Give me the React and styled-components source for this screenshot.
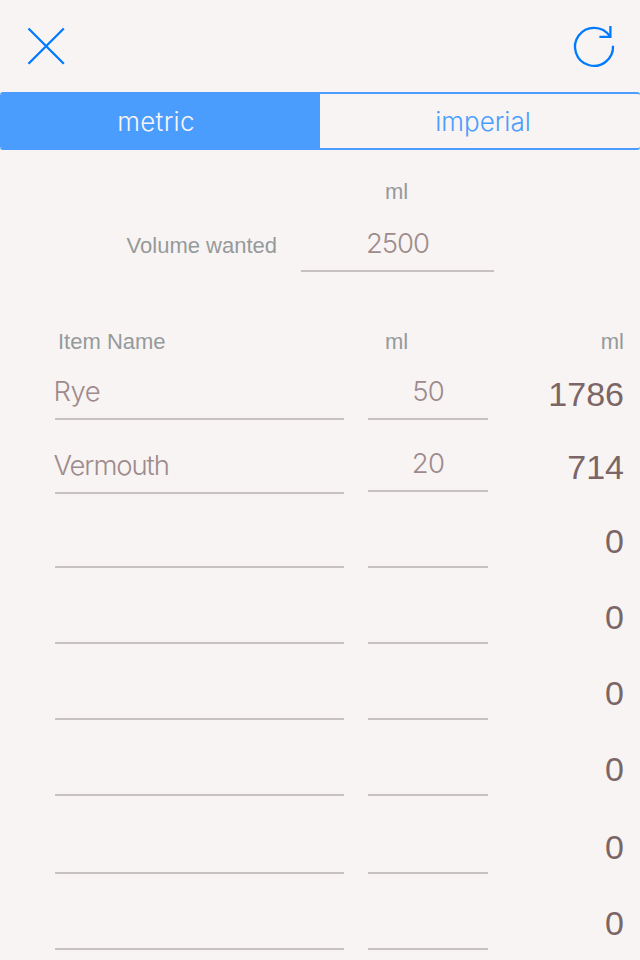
import React from "react";
import styled, { createGlobalStyle } from "styled-components";

const GlobalStyle = createGlobalStyle`
  * {
    box-sizing: border-box;
  }

  body {
    margin: 0;
    background: #f8f4f3;
  }
`;

const Screen = styled.div`
  width: 640px;
  height: 960px;
  overflow: hidden;
  background: #f8f4f3;
  font-family: "Liberation Sans", Arial, sans-serif;
`;

const Header = styled.header`
  display: flex;
  justify-content: space-between;
  height: 92px;
  padding: 22px 22px 0;
`;

const IconButton = styled.button`
  width: 48px;
  height: 48px;
  padding: 0;
  border: 0;
  background: none;
  svg {
    display: block;
    fill: none;
    stroke: #007aff;
    stroke-width: 2.3;
  }
`;

const Segments = styled.div`
  display: grid;
  grid-template-columns: 320px 320px;
  height: 58px;
  border: solid #4a9dfd;
  border-width: 2px 0;
  border-radius: 3px;
  overflow: hidden;
`;

const Segment = styled.button`
  padding: ${(props) => (props.$active ? "1px 8px 0 0" : "1px 0 0 6px")};
  border: 0;
  background: ${(props) => (props.$active ? "#4a9dfd" : "transparent")};
  color: ${(props) => (props.$active ? "#f8f4f3" : "#4a9dfd")};
  font-family: Inter, sans-serif;
  font-size: 26px;
  font-weight: 350;
  line-height: 53px;
  letter-spacing: ${(props) => (props.$active ? "0.3px" : "0")};
`;

const Label = styled.div`
  font-size: 22px;
  line-height: 28px;
  color: #959a9b;
  text-align: ${(props) => props.$align || "left"};
`;

const Field = styled.div`
  height: 50px;
  border-bottom: 2px solid #c7c2c1;
  margin-bottom: ${(props) => props.$lift || 0}px;
  color: #9e8b8d;
  font-family: Inter, sans-serif;
  font-size: 27.5px;
  font-weight: 300;
  line-height: 43px;
  letter-spacing: ${(props) => props.$spacing};
  text-indent: ${(props) => (props.$align ? 0 : "-1.5px")};
  text-align: ${(props) => props.$align || "left"};
`;

const Volume = styled.section`
  display: grid;
  grid-template-columns: 277px 193px;
  column-gap: 24px;
  padding-top: 28px;
`;

const VolumeLabel = styled(Label)`
  margin-top: 26px;
`;

const VolumeUnit = styled(Label)`
  grid-column: 2;
  padding-right: 2px;
`;

const VolumeField = styled(Field)`
  margin-top: 16px;
`;

const Row = styled.div`
  display: grid;
  grid-template-columns: 289px 120px 1fr;
  column-gap: 24px;
  align-items: end;
  height: ${(props) => props.$height}px;
  padding: 0 16px 0 55px;
`;

const HeadRow = styled(Row)`
  margin-top: 56px;
`;

const NameHead = styled(Label)`
  padding-left: 3px;
`;

const UnitHead = styled(Label)`
  padding-left: 17px;
`;

const Result = styled.div`
  height: ${(props) => props.$height || 47}px;
  font-size: 34px;
  line-height: 40px;
  color: #7b6566;
  text-align: right;
`;

const items = [
  { name: "Rye", amount: "50", result: "1786", height: 64, drop: 46, spacing: "-0.5px" },
  { name: "Vermouth", amount: "20", result: "714", height: 74, lift: 2 },
  { result: "0", height: 74 },
  { result: "0", height: 76 },
  { result: "0", height: 76 },
  { result: "0", height: 76 },
  { result: "0", height: 78 },
  { result: "0", height: 76 },
];

const CloseIcon = () => (
  <svg width="48" height="48" viewBox="0 0 48 48">
    <path d="M6.5 6.5 41.8 41.8M41.8 6.5 6.5 41.8" />
  </svg>
);

const ReloadIcon = () => (
  <svg width="48" height="48" viewBox="0 0 48 48">
    <path d="M43 23.8A19 19 0 1 1 39.8 14.2" />
    <path d="M40.4 4V14.8H29.4" />
  </svg>
);

const App = () => {
  return (
    <Screen>
      <GlobalStyle />
      <Header>
        <IconButton aria-label="Close">
          <CloseIcon />
        </IconButton>
        <IconButton aria-label="Reset">
          <ReloadIcon />
        </IconButton>
      </Header>
      <Segments>
        <Segment $active>metric</Segment>
        <Segment>imperial</Segment>
      </Segments>
      <Volume>
        <VolumeUnit $align="center">ml</VolumeUnit>
        <VolumeLabel $align="right">Volume wanted</VolumeLabel>
        <VolumeField $align="center" $spacing="-1px">
          2500
        </VolumeField>
      </Volume>
      <HeadRow $height={28}>
        <NameHead>Item Name</NameHead>
        <UnitHead>ml</UnitHead>
        <Label $align="right">ml</Label>
      </HeadRow>
      {items.map((item, index) => (
        <Row key={index} $height={item.height}>
          <Field $spacing={item.spacing || "-1.1px"}>{item.name}</Field>
          <Field $align="center" $lift={item.lift} $spacing="-0.8px">
            {item.amount}
          </Field>
          <Result $height={item.drop}>{item.result}</Result>
        </Row>
      ))}
    </Screen>
  );
};

export default App;
